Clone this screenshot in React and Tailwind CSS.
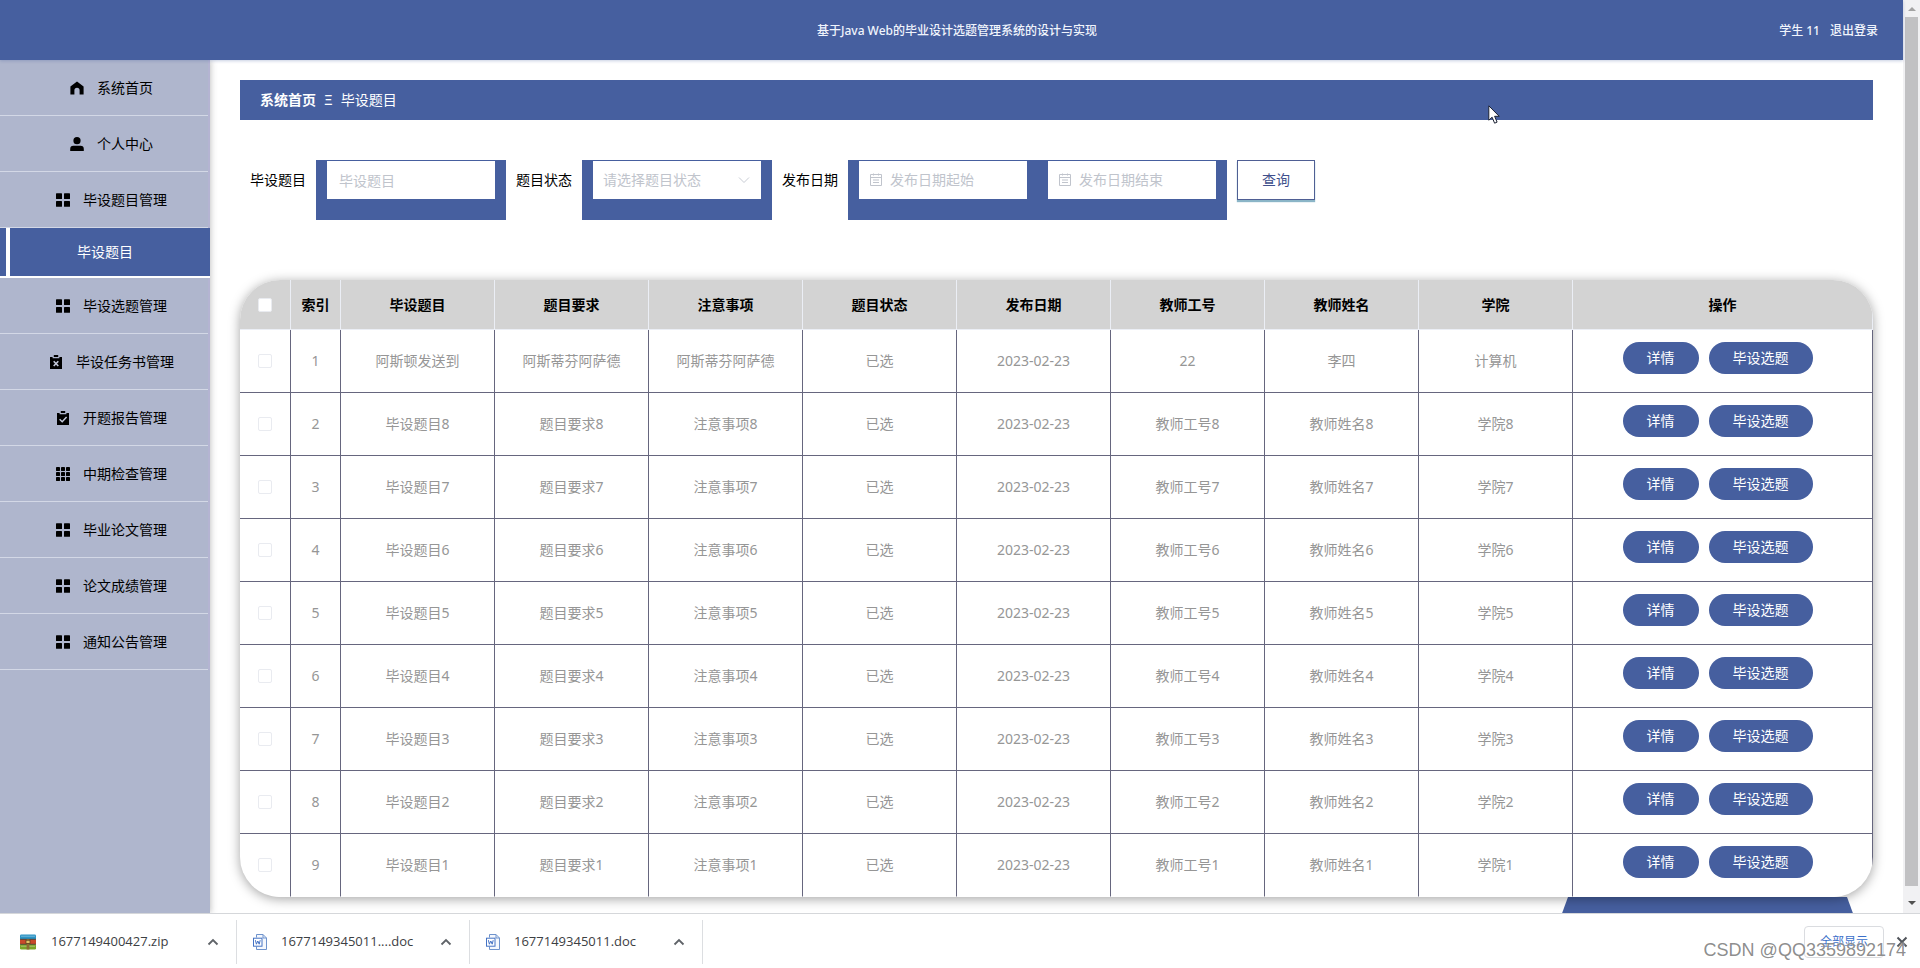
import React from "react";

const FONT = "font-['Noto_Sans','Noto_Sans_CJK_SC',sans-serif]";

function HomeIcon() {
  return (
    <svg width="14" height="14" viewBox="0 0 14 14" aria-hidden="true">
      <path d="M7 0.4 L13.6 5.4 V13.4 H9.6 V9.4 A2.6 2.6 0 0 0 4.4 9.4 V13.4 H0.4 V5.4 Z" fill="#000" strokeLinejoin="round" />
    </svg>
  );
}

function UserIcon() {
  return (
    <svg width="14" height="14" viewBox="0 0 14 14" aria-hidden="true">
      <circle cx="7" cy="3.7" r="3.6" fill="#000" />
      <path d="M0.2 14 V12 A3.2 3.2 0 0 1 3.4 8.8 H10.6 A3.2 3.2 0 0 1 13.8 12 V14 Z" fill="#000" />
    </svg>
  );
}

function GridIcon() {
  return (
    <svg width="14" height="14" viewBox="0 0 14 14" aria-hidden="true" fill="#000">
      <rect x="0" y="0.2" width="6" height="5.8" rx="0.6" />
      <rect x="8" y="0.2" width="6" height="5.8" rx="0.6" />
      <rect x="0" y="8" width="6" height="5.8" rx="0.6" />
      <rect x="8" y="8" width="6" height="5.8" rx="0.6" />
    </svg>
  );
}

function NineIcon() {
  const spots = [0, 5, 10];
  return (
    <svg width="14" height="14" viewBox="0 0 14 14" aria-hidden="true" fill="#000">
      {spots.map((y) => spots.map((x) => <rect key={x + "-" + y} x={x} y={y} width="4" height="4" rx="0.4" />))}
    </svg>
  );
}

function ReleaseIcon() {
  return (
    <svg width="14" height="14" viewBox="0 0 14 14" aria-hidden="true">
      <path d="M1 2 H3.6 V3.3 H10.4 V2 H13 V14 H1 Z M4.8 0 H9.2 V2 H4.8 Z" fill="#000" />
      <path d="M4.7 6.2 L9.3 11 M9.3 6.2 L4.7 11" stroke="#c3c8da" strokeWidth="1.6" />
    </svg>
  );
}

function ClaimIcon() {
  return (
    <svg width="14" height="14" viewBox="0 0 14 14" aria-hidden="true">
      <path d="M1 2 H3.6 V3.3 H10.4 V2 H13 V14 H1 Z M4.8 0 H9.2 V2 H4.8 Z" fill="#000" />
      <path d="M3.6 8.2 L6.2 10.7 L10.6 5.9" stroke="#c3c8da" strokeWidth="1.5" fill="none" />
    </svg>
  );
}

function CalendarIcon() {
  return (
    <svg width="14" height="14" viewBox="0 0 14 14" className="shrink-0" aria-hidden="true" fill="none" stroke="#c0c4cc">
      <path d="M1.5 1.5 H12.5 V12.5 H1.5 Z M1.5 4.5 H12.5 M4 7 H10 M4 9.5 H10 M4.5 0.5 V2.5 M9.5 0.5 V2.5" />
    </svg>
  );
}

const MENU = [
  { text: "系统首页", icon: HomeIcon },
  { text: "个人中心", icon: UserIcon },
  { text: "毕设题目管理", icon: GridIcon, child: "毕设题目" },
  { text: "毕设选题管理", icon: GridIcon },
  { text: "毕设任务书管理", icon: ReleaseIcon },
  { text: "开题报告管理", icon: ClaimIcon },
  { text: "中期检查管理", icon: NineIcon },
  { text: "毕业论文管理", icon: GridIcon },
  { text: "论文成绩管理", icon: GridIcon },
  { text: "通知公告管理", icon: GridIcon },
];

const HEADS = ["毕设题目", "题目要求", "注意事项", "题目状态", "发布日期", "教师工号", "教师姓名", "学院"];

const ROWS = [
  ["阿斯顿发送到", "阿斯蒂芬阿萨德", "阿斯蒂芬阿萨德", "已选", "2023-02-23", "22", "李四", "计算机"],
  ...[8, 7, 6, 5, 4, 3, 2, 1].map((n) => [
    "毕设题目" + n,
    "题目要求" + n,
    "注意事项" + n,
    "已选",
    "2023-02-23",
    "教师工号" + n,
    "教师姓名" + n,
    "学院" + n,
  ]),
];

function Sidebar() {
  return (
    <nav className="w-[210px] shrink-0 bg-[#afb6cd] text-sm text-black shadow-[1px_0_6px_rgba(64,64,64,0.3)]">
      <ul className="border-r-2 border-[#b4b4d2]">
        {MENU.map(({ text, icon: Icon, child }) => (
          <li key={text}>
            <a href="#" className="flex h-14 items-center justify-center gap-[13px] border-b border-[#d3d8e6] pl-[15px]">
              <Icon />
              {text}
            </a>
            {child && (
              <a
                href="#"
                className="-mr-0.5 flex h-[50px] items-stretch border-b-2 border-white bg-[#465f9f] text-white"
              >
                <span className="ml-1.5 w-1 bg-white" />
                <span className="flex flex-1 items-center justify-center pr-2.5">{child}</span>
              </a>
            )}
          </li>
        ))}
      </ul>
    </nav>
  );
}

const BLOCK = "flex h-[60px] bg-[#465f9f] px-2.5";
const FIELD = "h-10 w-[170px] border border-[#465f9f] bg-white text-sm placeholder:text-[#c0c4cc] outline-none";

function DateField({ id, label }) {
  return (
    <div className="flex h-10 w-[170px] items-center gap-[7px] border border-[#465f9f] bg-white pl-2.5">
      <CalendarIcon />
      <input id={id} aria-label={label} placeholder={label} className="w-full min-w-0 text-sm outline-none placeholder:text-[#c0c4cc]" />
    </div>
  );
}

function SearchForm() {
  return (
    <form className="mt-10 flex items-start gap-2.5 pl-2.5 text-sm text-black" onSubmit={(e) => e.preventDefault()}>
      <label htmlFor="topic" className="leading-10">毕设题目</label>
      <div className={BLOCK}>
        <input id="topic" placeholder="毕设题目" className={FIELD + " px-3"} />
      </div>
      <label htmlFor="status" className="leading-10">题目状态</label>
      <div className={BLOCK}>
        <div className="grid">
          <select id="status" defaultValue="" className={FIELD + " col-start-1 row-start-1 appearance-none pl-2.5 text-[#c0c4cc]"}>
            <option value="">请选择题目状态</option>
          </select>
          <svg width="12" height="8" viewBox="0 0 12 8" className="pointer-events-none col-start-1 row-start-1 mt-4 mr-3 justify-self-end" aria-hidden="true">
            <path d="M1 1.5 L6 6.5 L11 1.5" fill="none" stroke="#c8ccd4" />
          </svg>
        </div>
      </div>
      <label htmlFor="from" className="leading-10">发布日期</label>
      <div className={BLOCK + " gap-[19px]"}>
        <DateField id="from" label="发布日期起始" />
        <DateField id="to" label="发布日期结束" />
      </div>
      <button type="submit" className="h-10 w-[78px] border border-[#4f5f94] bg-white text-[#3f4f8c] shadow-[0_2px_1px_rgba(90,150,175,0.7)]">
        查询
      </button>
    </form>
  );
}

const TH = "border-r border-b border-[#ebeef5] bg-[#d3d3d3] font-bold";
const TD = "border-r border-b border-[#66667e]";
const CHECK = "block size-3.5 mx-auto appearance-none rounded-xs border border-[#e9ebf0] bg-white";
const ACTION = "h-8 rounded-full bg-[#465f9f] text-sm text-white";

function TopicTable() {
  return (
    <div className="relative z-10 mt-[60px] overflow-hidden rounded-[40px] bg-white shadow-[0_2px_12px_rgba(0,0,0,0.36)]">
      <table className="w-full table-fixed border-separate border-spacing-0 text-center text-sm">
        <colgroup>
          <col className="w-[51px]" />
          <col className="w-[50px]" />
          {HEADS.map((h) => (
            <col key={h} />
          ))}
          <col className="w-[300px]" />
        </colgroup>
        <thead>
          <tr className="h-[50px] text-black">
            <th className={TH}>
              <input type="checkbox" aria-label="全选" className={CHECK} />
            </th>
            <th className={TH}>索引</th>
            {HEADS.map((h) => (
              <th key={h} className={TH}>{h}</th>
            ))}
            <th className={TH}>操作</th>
          </tr>
        </thead>
        <tbody className="text-[#969696] [&>tr:last-child>td]:border-b-white">
          {ROWS.map((row, i) => (
            <tr key={i} className="h-[63px]">
              <td className={TD}>
                <input type="checkbox" aria-label={"选择 " + (i + 1)} className={CHECK} />
              </td>
              <td className={TD}>{i + 1}</td>
              {row.map((cell, j) => (
                <td key={j} className={TD}>{cell}</td>
              ))}
              <td className={TD}>
                <div className="mb-1.5 flex justify-center gap-2.5 pr-2.5">
                  <button type="button" className={ACTION + " w-[76px]"}>详情</button>
                  <button type="button" className={ACTION + " w-[104px]"}>毕设选题</button>
                </div>
              </td>
            </tr>
          ))}
        </tbody>
      </table>
    </div>
  );
}

function Scrollbar() {
  return (
    <div className="flex w-[17px] shrink-0 flex-col items-center bg-[#f1f1f3]" aria-hidden="true">
      <svg width="16" height="17" viewBox="0 0 16 17">
        <path d="M4 11 L8 7 L12 11 Z" fill="#a3a3a3" />
      </svg>
      <div className="w-[13px] flex-1 bg-[#c1c1c3]" />
      <svg width="16" height="27" viewBox="0 0 16 27">
        <path d="M4 15 L8 19 L12 15 Z" fill="#505050" />
      </svg>
    </div>
  );
}

function ZipIcon() {
  return (
    <svg width="18" height="16" viewBox="0 0 18 16" aria-hidden="true">
      <rect x="1" y="0.5" width="16" height="5" rx="1.2" fill="#2b93c4" />
      <rect x="1" y="5.3" width="16" height="5" rx="0.5" fill="#c8492b" />
      <rect x="1" y="10.3" width="16" height="5.2" rx="1.2" fill="#7ba428" />
      <path d="M1 5.3 H17 M1 10.3 H17" stroke="#3c3226" strokeWidth="0.8" />
      <path d="M2 2.2 H16 M2 12.2 H16" stroke="#ffffff" strokeOpacity="0.35" />
      <rect x="7.6" y="5" width="2.8" height="10.5" fill="#8d6a34" />
      <rect x="7" y="6.2" width="4" height="3.2" fill="#e2c166" stroke="#4d3a1b" strokeWidth="0.7" />
    </svg>
  );
}

function DocIcon() {
  return (
    <svg width="14" height="16" viewBox="2 0 14 16" aria-hidden="true" fill="none" stroke="#6f93cc">
      <path d="M5.5 3.5 V0.5 H12 L15.5 4 V15.5 H5.5 V12.5" fill="#f5f8fd" />
      <path d="M12 0.5 V4 H15.5" />
      <rect x="2.5" y="4.2" width="8.5" height="8" fill="#fff" stroke="#4472c4" />
      <path d="M4.4 6.2 L5.4 10.2 L6.8 7 L8.2 10.2 L9.2 6.2" stroke="#4472c4" />
    </svg>
  );
}

const DOWNLOADS = [
  { name: "1677149400427.zip", icon: ZipIcon },
  { name: "1677149345011....doc", icon: DocIcon },
  { name: "1677149345011.doc", icon: DocIcon },
];

function DownloadBar() {
  return (
    <footer className="flex h-[55px] shrink-0 items-start border-t border-[#d5d7da] bg-white pt-1.5 text-[#3c4043]">
      {DOWNLOADS.map(({ name, icon: Icon }) => (
        <div key={name} className="flex h-11 w-[233px] items-center border-r border-[#dcdee1] pl-4 pr-[17px] first:w-[237px] first:pl-[19px]">
          <Icon />
          <span className="ml-3 flex-1 pl-0.5 font-['Open_Sans',sans-serif] text-[13px]">{name}</span>
          <button type="button" aria-label={"更多 " + name}>
            <svg width="12" height="8" viewBox="0 0 12 8" aria-hidden="true">
              <path d="M1.5 6.5 L6 2 L10.5 6.5" fill="none" stroke="#5f6368" strokeWidth="1.8" />
            </svg>
          </button>
        </div>
      ))}
      <div className="ml-auto flex h-11 items-center gap-3 pr-3">
        <button type="button" className="h-8 w-20 rounded border border-[#dadce0] text-xs text-[#3b6fc9]">
          全部显示
        </button>
        <button type="button" aria-label="关闭">
          <svg width="12" height="12" viewBox="0 0 12 12" aria-hidden="true">
            <path d="M1.5 1.5 L10.5 10.5 M10.5 1.5 L1.5 10.5" stroke="#50545a" strokeWidth="2" />
          </svg>
        </button>
      </div>
    </footer>
  );
}

export default function App() {
  return (
    <div className={"relative flex h-screen flex-col overflow-hidden bg-white " + FONT}>
      <div className="flex min-h-0 flex-1">
        <div className="flex min-w-0 flex-1 flex-col">
          <header className="relative z-20 grid h-[60px] shrink-0 grid-cols-[1fr_auto_1fr] items-center bg-[#465f9f] pt-0.5 pr-[25px] pl-9 text-xs text-[#f0f4fc] shadow-[0_1px_3px_rgba(70,95,159,0.3)]">
            <h1 className="col-start-2 font-medium">基于Java Web的毕业设计选题管理系统的设计与实现</h1>
            <div className="flex justify-end gap-2.5 font-medium">
              <span>学生 11</span>
              <a href="#">退出登录</a>
            </div>
          </header>
          <div className="flex min-h-0 flex-1">
            <Sidebar />
            <main className="min-w-0 flex-1 overflow-hidden px-[30px] pt-5">
              <div className="flex h-10 items-center bg-[#465f9f] px-5 text-sm text-white">
                <a href="#" className="font-bold">系统首页</a>
                <span className="mx-2">Ξ</span>
                <span>毕设题目</span>
              </div>
              <SearchForm />
              <TopicTable />
              <div className="flex justify-end">
                <svg width="320" height="60" viewBox="0 0 320 60" aria-hidden="true">
                  <path d="M15 0 H294 L316 60 H-7 Z" fill="#465f9f" />
                </svg>
              </div>
            </main>
          </div>
        </div>
        <Scrollbar />
      </div>
      <DownloadBar />
      <svg width="14" height="21" viewBox="0 0 14 21" className="absolute top-[105px] left-[1488px] z-30" aria-hidden="true">
        <path d="M0.8 0.8 V15.2 L4.1 12.2 L6.6 18.2 L9.1 17.1 L6.6 11.3 H11.2 Z" fill="#fff" stroke="#1c2233" />
      </svg>
      <div className="pointer-events-none absolute right-3.5 bottom-1.5 z-30 font-['Liberation_Sans',sans-serif] text-lg leading-6 text-[#808080]/90 [text-shadow:0_0_2px_#fff]">
        CSDN @QQ3359892174
      </div>
    </div>
  );
}
